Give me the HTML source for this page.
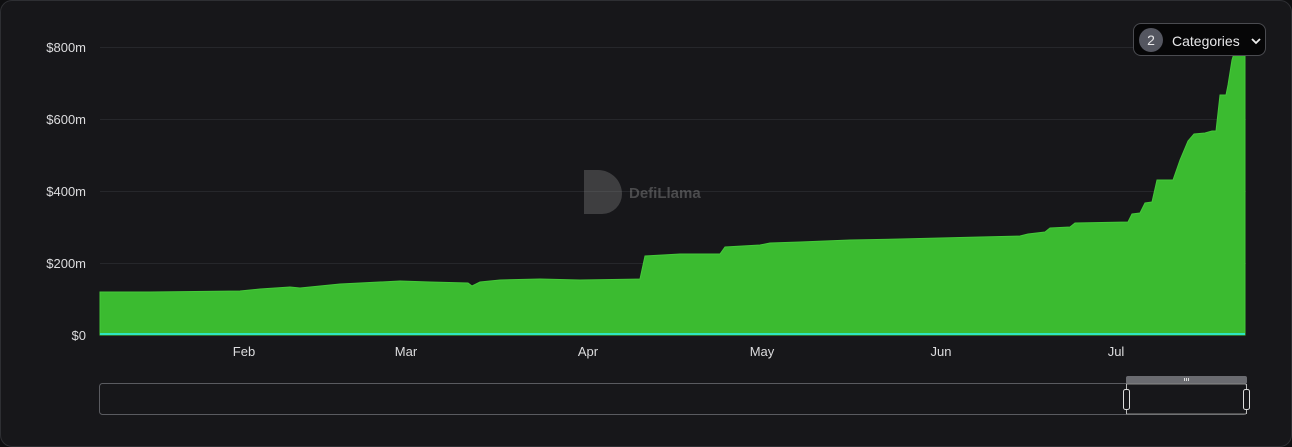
<!DOCTYPE html>
<html><head><meta charset="utf-8"><style>
html,body{margin:0;padding:0;background:#0f0f11;}
.card{position:absolute;left:0;top:0;width:1290px;height:445px;border:1px solid #2e2f33;border-radius:12px;background:#17171a;overflow:hidden;font-family:"Liberation Sans",sans-serif;}
.btn{position:absolute;left:1132px;top:22px;width:133px;height:33px;box-sizing:border-box;border:1px solid #4a4b50;border-radius:8px;background:#060607;color:#e8e8ea;font-size:14px;}
.btn .n{position:absolute;left:5px;top:4px;width:24px;height:24px;border-radius:50%;background:#545660;text-align:center;line-height:24px;font-size:14px;}
.btn .t{position:absolute;left:38px;top:9px;}
</style></head><body>
<div class="card">
<svg width="1292" height="447" style="position:absolute;left:-1px;top:-1px" font-family="Liberation Sans, sans-serif">
<g stroke="#26272b" stroke-width="1">
<line x1="100" y1="47.5" x2="1246" y2="47.5"/><line x1="100" y1="119.5" x2="1246" y2="119.5"/>
<line x1="100" y1="191.5" x2="1246" y2="191.5"/><line x1="100" y1="263.5" x2="1246" y2="263.5"/>
</g>
<g fill="#dcdcde" font-size="13" text-anchor="end">
<text x="86" y="52">$800m</text><text x="86" y="124">$600m</text><text x="86" y="196">$400m</text><text x="86" y="268">$200m</text><text x="86" y="340">$0</text>
</g>
<g fill="#dcdcde" font-size="13" text-anchor="middle">
<text x="244" y="356">Feb</text><text x="406" y="356">Mar</text><text x="588" y="356">Apr</text><text x="762" y="356">May</text><text x="941" y="356">Jun</text><text x="1116" y="356">Jul</text>
</g>
<g opacity="0.35">
<path d="M584 170h14a24 24 0 0 1 24 24v0a20 20 0 0 1-20 20h-18z" fill="#888"/>
<text x="629" y="198" font-size="15" font-weight="bold" fill="#aaa">DefiLlama</text>
</g>
<path fill="#3bbb30" stroke="#45c93a" stroke-width="1" d="M100 292L150 292L240 291L260 289L290 287L300 288L320 286L340 284L360 283L400 281L430 282L468 283L472 286L480 282L500 280L540 279L580 280L640 279L645 256L680 254L720 254L725 247L760 245L770 243L800 242L850 240L900 239L940 238L980 237L1020 236L1028 234L1045 232L1050 228L1070 227L1075 223L1128 222L1132 214L1140 213L1145 203L1152 202L1157 180L1173 180L1180 160L1188 141L1194 134L1205 133L1212 131L1216 131L1220 95L1226 95L1228 85L1232 60L1236 47L1245 47L1245 335L100 335Z"/>
<line x1="100" y1="334" x2="1245" y2="334" stroke="#2ee6c0" stroke-width="2"/>
<rect x="99.5" y="383.5" width="1147" height="31" rx="3" fill="none" stroke="#5a5b60"/>
<rect x="1126" y="376" width="121" height="8" rx="2" fill="#6a6b70"/>
<g fill="#ddd"><rect x="1184" y="378" width="1" height="3"/><rect x="1186" y="378" width="1" height="3"/><rect x="1188" y="378" width="1" height="3"/></g>
<line x1="1126" y1="384" x2="1246" y2="384" stroke="#888"/><line x1="1126" y1="414" x2="1246" y2="414" stroke="#888"/>
<line x1="1126.5" y1="384" x2="1126.5" y2="414" stroke="#bbb"/><line x1="1246.5" y1="384" x2="1246.5" y2="414" stroke="#bbb"/>
<rect x="1123.5" y="389.5" width="6" height="20" rx="2" fill="#17171a" stroke="#ddd"/>
<rect x="1243.5" y="389.5" width="6" height="20" rx="2" fill="#17171a" stroke="#ddd"/>
</svg>
<div class="btn"><div class="n">2</div><div class="t">Categories</div>
<svg width="10" height="8" style="position:absolute;left:117px;top:13px"><path d="M1 2l4 4 4-4" stroke="#eee" stroke-width="1.8" fill="none"/></svg></div>
</div>
</body></html>
